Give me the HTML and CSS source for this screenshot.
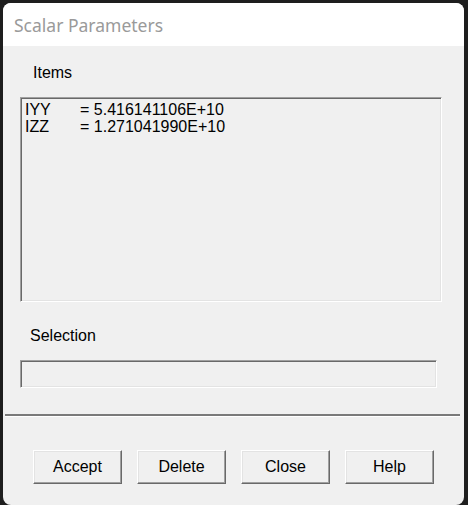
FILE: index.html
```html
<!DOCTYPE html>
<html>
<head>
<meta charset="utf-8">
<link rel="stylesheet" href="styles.css">
</head>
<body>
<div class="window">
  <div class="titlebar">Scalar Parameters</div>
  <div class="content">
    <div class="label label-items">Items</div>
    <div class="listbox sunken">
      <div class="row"><span class="name">IYY</span><span class="val">= 5.416141106E+10</span></div>
      <div class="row"><span class="name">IZZ</span><span class="val">= 1.271041990E+10</span></div>
    </div>
    <div class="label label-sel">Selection</div>
    <div class="field sunken"></div>
    <div class="separator"></div>
    <div class="buttons">
      <button class="btn">Accept</button>
      <button class="btn">Delete</button>
      <button class="btn">Close</button>
      <button class="btn">Help</button>
    </div>
  </div>
</div>
</body>
</html>
```
FILE: styles.css
```css
html, body {
  margin: 0;
  padding: 0;
  background: #1e1e1e;
  width: 468px;
  height: 505px;
  overflow: hidden;
}
.window {
  margin: 3px 4px 0 3px;
  width: 461px;
  height: 502px;
  background: #f0f0f0;
  border-radius: 8px;
  overflow: hidden;
  display: flex;
  flex-direction: column;
}
.titlebar {
  height: 43px;
  flex: none;
  background: #ffffff;
  display: flex;
  align-items: center;
  padding-left: 11px;
  font-family: "Noto Sans", sans-serif;
  font-size: 17.5px;
  color: #9a9a9a;
}
.content {
  font-family: "Liberation Sans", Arial, sans-serif;
  font-size: 16px;
  line-height: 18px;
  color: #000;
  display: flex;
  flex-direction: column;
}
.label-items {
  margin: 18px 0 0 30px;
}
.sunken {
  box-sizing: border-box;
  border: 1px solid;
  border-color: #a0a0a0 #ffffff #ffffff #a0a0a0;
  box-shadow: inset 1px 1px 0 #696969, inset -1px -1px 0 #e3e3e3;
  background: #f0f0f0;
}
.listbox {
  margin: 15px 0 0 17px;
  width: 422px;
  height: 205px;
  padding: 3px 0 0 4px;
}
.row {
  display: flex;
  line-height: 17px;
}
.name {
  width: 55px;
}
.label-sel {
  margin: 25px 0 0 27px;
}
.field {
  margin: 15px 0 0 17px;
  width: 417px;
  height: 28px;
}
.separator {
  margin: 26px 0 0 2px;
  width: 455px;
  border-top: 2px solid #7a7a7a;
  border-bottom: 1px solid #ffffff;
  box-sizing: border-box;
  height: 3px;
}
.buttons {
  margin: 33px 0 0 30px;
  display: flex;
  gap: 15px;
}
.btn {
  width: 89px;
  height: 34px;
  box-sizing: border-box;
  background: #f0f0f0;
  border: 1px solid;
  border-color: #ffffff #696969 #696969 #ffffff;
  box-shadow: inset -1px -1px 0 #a0a0a0, inset 1px 1px 0 #e3e3e3;
  font-family: "Liberation Sans", Arial, sans-serif;
  font-size: 16px;
  color: #000;
  padding: 0;
  border-radius: 0;
}
```
